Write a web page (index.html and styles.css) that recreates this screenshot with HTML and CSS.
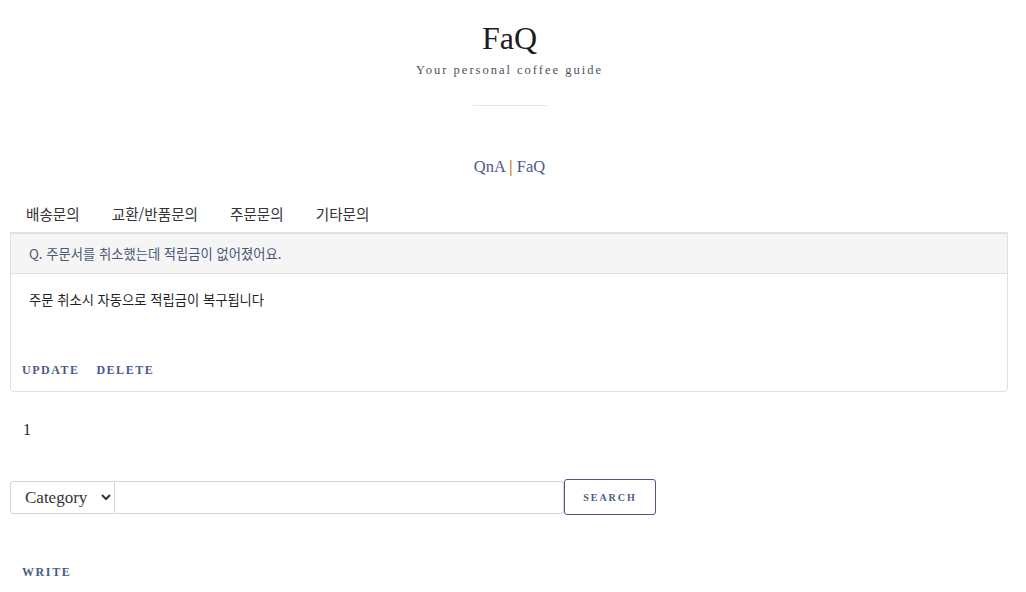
FILE: index.html
```html
<!DOCTYPE html>
<html lang="ko">
<head>
<meta charset="utf-8">
<title>FaQ</title>
<link rel="stylesheet" href="styles.css">
</head>
<body>
<header class="site-head">
  <h1 class="site-title">FaQ</h1>
  <p class="site-sub">Your personal coffee guide</p>
  <div class="rule"></div>
</header>
<nav class="board-nav"><a href="#">QnA</a> <span class="bar">|</span> <a href="#">FaQ</a></nav>
<main class="main">
  <ul class="tabs">
    <li>배송문의</li>
    <li>교환/반품문의</li>
    <li>주문문의</li>
    <li>기타문의</li>
  </ul>
  <section class="card">
    <div class="card-head">Q. 주문서를 취소했는데 적립금이 없어졌어요.</div>
    <div class="card-body">
      <p class="answer">주문 취소시 자동으로 적립금이 복구됩니다</p>
      <div class="actions"><a href="#">UPDATE</a><a href="#">DELETE</a></div>
    </div>
  </section>
  <div class="pager">1</div>
  <form class="search">
    <select class="sel"><option>Category</option></select>
    <input class="inp" type="text">
    <button class="btn" type="button">SEARCH</button>
  </form>
  <div class="write"><a href="#">WRITE</a></div>
</main>
</body>
</html>
```
FILE: styles.css
```css
* { box-sizing: border-box; }
body {
  margin: 0;
  font-family: "Liberation Serif", "Noto Sans CJK KR", serif;
  color: #222;
  background: #fff;
}
a { text-decoration: none; color: #4c5a88; }
.site-head { text-align: center; padding: 18px 7px 0 0; }
.site-title {
  margin: 0;
  font-size: 32px;
  line-height: 40px;
  font-weight: normal;
  color: #1d1d1f;
}
.site-sub {
  margin: 4px 0 0;
  font-size: 12.5px;
  line-height: 16px;
  letter-spacing: 2px;
  color: #50505c;
}
.rule {
  width: 74px;
  height: 1px;
  background: #e6e6e6;
  margin: 27px auto 0;
}
.board-nav {
  margin-top: 51px;
  padding-right: 7px;
  text-align: center;
  font-size: 16.5px;
  line-height: 20px;
}
.board-nav .bar { color: #c97f22; font-weight: bold; }
.main { margin: 27px 18px 0 10px; }
.tabs {
  list-style: none;
  margin: 0;
  padding: 0 0 8px;
  display: flex;
  border-bottom: 1px solid #e3e3e3;
  font-family: "Noto Sans CJK KR", sans-serif;
  font-size: 14.6px;
  line-height: 20px;
  color: #333;
}
.tabs li { padding: 0 16px; }
.card {
  border: 1px solid #e0e0e0;
  border-radius: 0 0 4px 4px;
  font-family: "Noto Sans CJK KR", sans-serif;
  font-size: 13.3px;
}
.card-head {
  background: #f5f5f5;
  padding: 10px 18px 9px;
  line-height: 20px;
  color: #4a5577;
  border-bottom: 1px solid #e0e0e0;
}
.card-body { padding: 16px 0 13px; }
.answer {
  margin: 0;
  padding: 0 18px;
  line-height: 20px;
  color: #1f1f1f;
}
.actions {
  margin-top: 52px;
  padding-left: 11px;
  display: flex;
  gap: 17px;
  font-family: "Liberation Serif", serif;
  font-size: 12px;
  line-height: 16px;
  font-weight: bold;
  letter-spacing: 1.5px;
}
.actions a { color: #4c5a88; }
.pager {
  margin-top: 28px;
  padding-left: 13px;
  font-size: 16px;
  line-height: 20px;
  color: #1f1f1f;
}
.search {
  margin-top: 39px;
  display: flex;
  align-items: center;
}
.sel {
  width: 105px;
  height: 33px;
  border: 1px solid #d3d3d8;
  border-radius: 3px 0 0 3px;
  background: #fff;
  font-family: "Liberation Serif", serif;
  font-size: 17px;
  color: #333;
  padding: 0 6px 0 10px;
}
.inp {
  width: 449px;
  height: 33px;
  border: 1px solid #d3d3d8;
  border-left: none;
  border-radius: 0 3px 3px 0;
  margin: 0;
}
.btn {
  width: 92px;
  height: 36px;
  background: #fff;
  border: 1px solid #4c5a88;
  border-radius: 3px;
  font-family: "Liberation Serif", serif;
  font-size: 10px;
  font-weight: bold;
  letter-spacing: 2px;
  color: #4c5a88;
  padding: 0;
}
.write {
  margin-top: 49px;
  padding-left: 12px;
  font-size: 12px;
  line-height: 16px;
  font-weight: bold;
  letter-spacing: 1.6px;
}
```
